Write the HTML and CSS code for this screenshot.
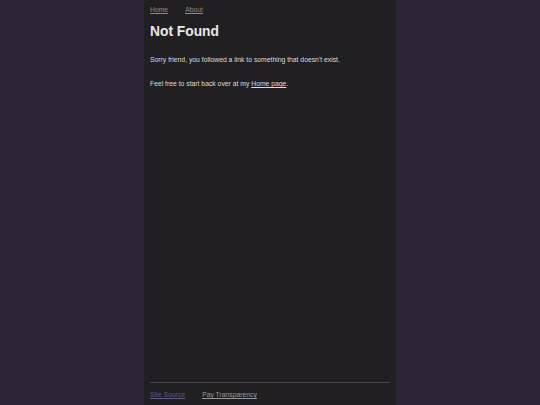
FILE: index.html
```html
<!DOCTYPE html>
<html lang="en">
<head>
<meta charset="utf-8">
<title>Not Found</title>
<link rel="stylesheet" href="styles.css">
</head>
<body>
<div class="page">
  <nav class="nav">
    <a href="#" class="nav-link">Home</a>
    <a href="#" class="nav-link">About</a>
  </nav>
  <main class="main">
    <h1 class="title">Not Found</h1>
    <p class="para">Sorry friend, you followed a link to something that doesn't exist.</p>
    <p class="para">Feel free to start back over at my <a href="#" class="inline-link">Home page</a>.</p>
  </main>
  <footer class="footer">
    <a href="#" class="foot-link visited">Site Source</a>
    <a href="#" class="foot-link">Pay Transparency</a>
  </footer>
</div>
</body>
</html>
```
FILE: styles.css
```css
html, body {
  margin: 0;
  height: 100%;
}
body {
  background: #2c2337;
  font-family: "Liberation Sans", Arial, sans-serif;
  font-size: 6.8px;
  color: #dcdcdc;
}
.page {
  width: 252px;
  margin-left: 144px;
  min-height: 100%;
  box-sizing: border-box;
  padding: 0 6px;
  background: #221f22;
  display: flex;
  flex-direction: column;
}
.nav {
  display: flex;
  gap: 17px;
  padding-top: 6px;
}
.nav-link {
  color: #8c8a8c;
  text-decoration: underline;
}
.main {
  flex: 1;
}
.title {
  font-size: 13.8px;
  font-weight: bold;
  color: #e8e8e8;
  margin: 11px 0 16px;
}
.para {
  margin: 0 0 15px;
  line-height: 9px;
}
.inline-link {
  color: #dcdcdc;
}
.footer {
  border-top: 1px solid #48444a;
  display: flex;
  gap: 17px;
  padding: 8px 0 4px;
  height: 10px;
}
.foot-link {
  color: #9a989a;
}
.foot-link.visited {
  color: #66587a;
}
```
